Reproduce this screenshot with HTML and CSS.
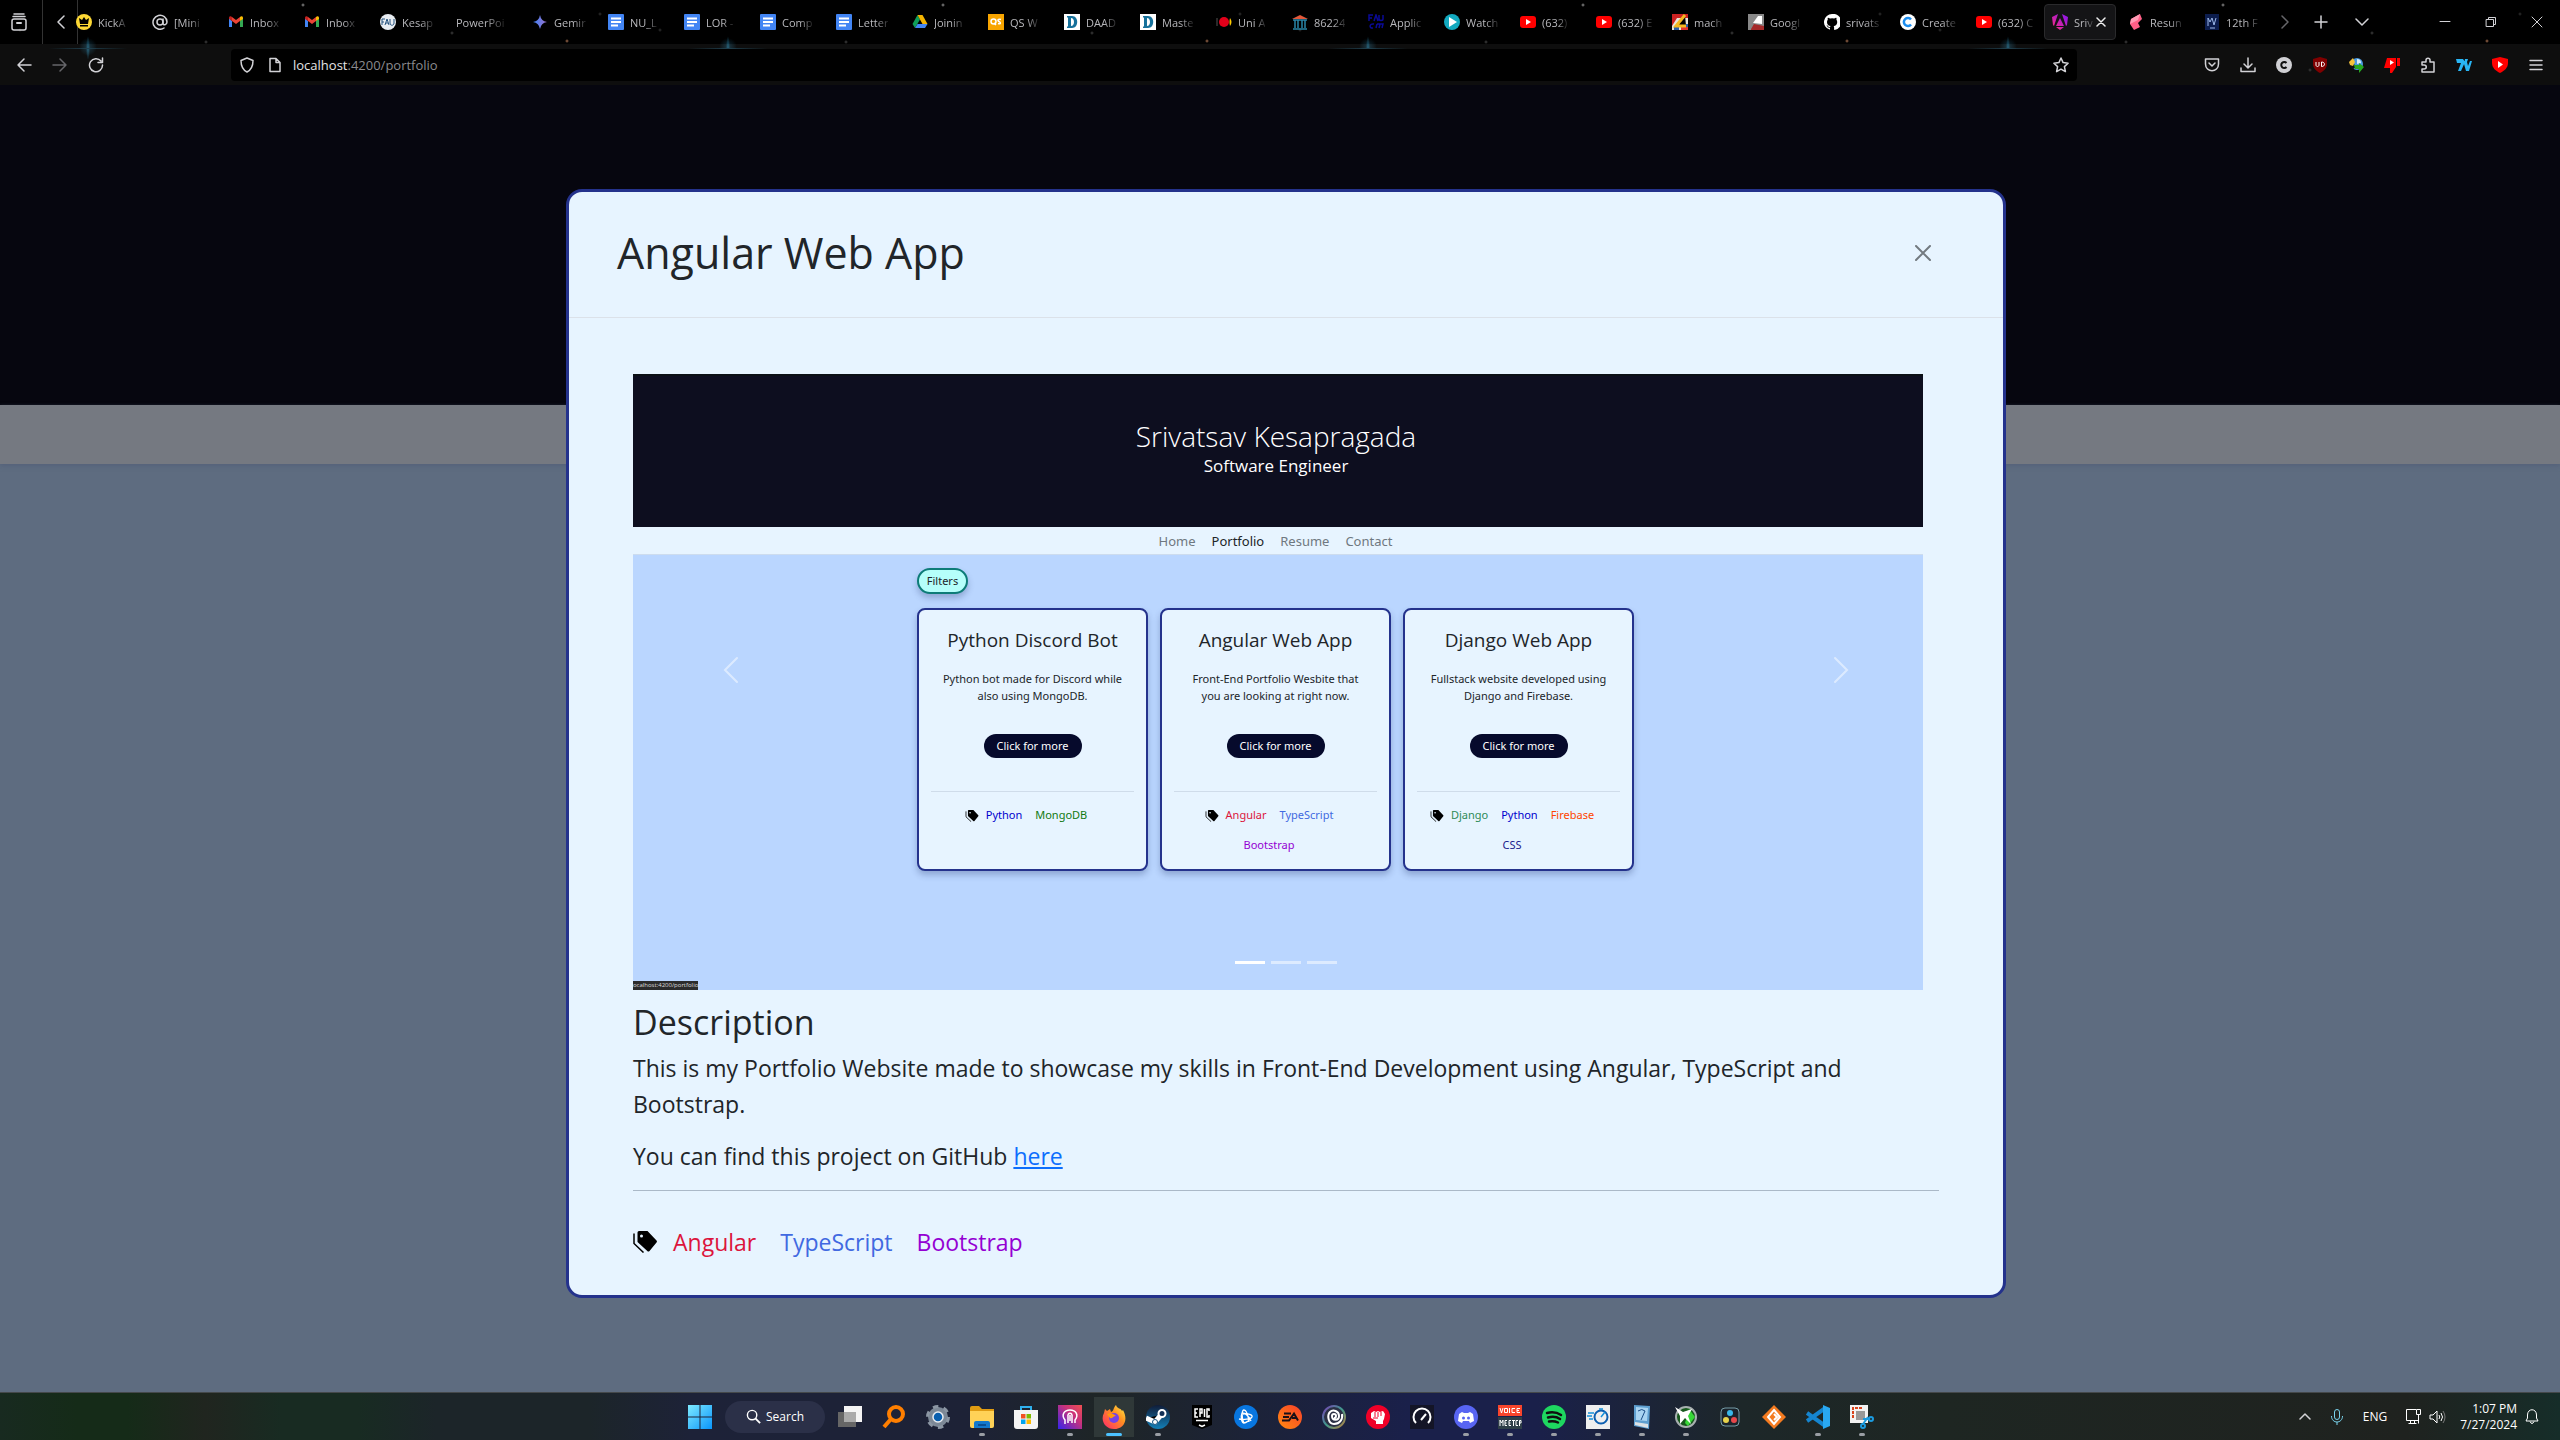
FILE: index.html
```html
<!DOCTYPE html>
<html lang="en">
<head>
<meta charset="utf-8">
<title>Srivatsav Kesapragada</title>
<link rel="stylesheet" href="styles.css">
</head>
<body>
<svg class="defs" aria-hidden="true">
  <symbol id="gmail" viewBox="0 0 16 16"><path fill="#4285f4" d="M1 4v9h3V7z"/><path fill="#34a853" d="M12 13h3V4l-3 3z"/><path fill="#ea4335" d="M4 3l4 3 4-3v4l-4 3-4-3z"/><path fill="#c5221f" d="M1 4c0-2 2-2 3-1v4L1 5z"/><path fill="#fbbc04" d="M15 4c0-2-2-2-3-1v4l3-2z"/></symbol>
  <symbol id="doc" viewBox="0 0 16 16"><rect width="16" height="16" rx="1" fill="#4285f4"/><path stroke="#fff" stroke-width="2" d="M3 4.500h10M3 8h10M3 11.500h7"/></symbol>
  <symbol id="daad" viewBox="0 0 16 16"><path fill="#fff" d="M0 0h16v16H0z"/><path fill="#16719b" fill-rule="evenodd" d="M3 2h5c7 0 7 12 0 12H3v-1l1-1V4L3 3zM7 4v8c4 0 4-8 0-8z"/></symbol>
  <symbol id="yt" viewBox="0 0 16 16"><rect y="2" width="16" height="12" rx="3" fill="#f00"/><path fill="#fff" d="M6 5l5 3-5 3z"/></symbol>
  <symbol id="tag" viewBox="0 0 24 22"><path d="M6 0h8.500l9 9.500a1.500 1.500 0 010 2l-7 8.500a1.500 1.500 0 01-2.200 0L4.500 11V1.500A1.500 1.500 0 016 0z"/><path fill="none" stroke="#000" stroke-width="1.500" d="M1 2.500v10l9.500 9"/><path fill="none" stroke="#e7f4ff" d="M3.500 1v10.500L13 21"/><circle cx="8.500" cy="5" r="1.500" fill="#e7f4ff"/></symbol>
</svg>

<header class="chrome">
  <div class="tabbar">
    <button class="box" aria-label="Recent browsing"><svg width="18" height="18" viewBox="0 0 18 18" class="line"><path d="M4 1h10M3 3.500h12"/><rect x="2" y="6" width="14" height="11" rx="2"/><path d="M7 10h4" stroke-width="2"/></svg></button>
    <button class="prev" aria-label="Scroll tabs left"><svg width="10" height="14" viewBox="0 0 10 14" class="line"><path d="M8 1L2 7l6 6"/></svg></button>
    <nav class="tabs">
      <a class="tab" href="#"><svg viewBox="0 0 16 16"><circle cx="8" cy="8" r="8" fill="#fdd835"/><path d="M3 4l3 2 2-3 2 3 3-2-1 6H4zM4 11h8v1.500H4z"/></svg><span>KickA</span></a>
      <a class="tab" href="#"><svg viewBox="0 0 16 16" class="line"><circle cx="8" cy="8" r="3"/><path d="M11 5v4c0 3 4 2 4-1a7 7 0 10-3 6"/></svg><span>[Mini</span></a>
      <a class="tab" href="#"><svg><use href="#gmail"/></svg><span>Inbox</span></a>
      <a class="tab" href="#"><svg><use href="#gmail"/></svg><span>Inbox</span></a>
      <a class="tab" href="#"><svg viewBox="0 0 16 16"><circle cx="8" cy="8" r="8" fill="#e8edf2"/><path stroke="#24527e" fill="none" d="M2 11V5h3M2 8h2M5 11l2-6 2 6M6 9h2M10 5v4c0 3 4 3 4 0V5"/></svg><span>Kesap</span></a>
      <a class="tab plain" href="#"><span>PowerPoi</span></a>
      <a class="tab" href="#"><svg viewBox="0 0 16 16"><defs><linearGradient id="gem"><stop stop-color="#3f83f8"/><stop offset="1" stop-color="#9b72cb"/></linearGradient></defs><path fill="url(#gem)" d="M8 1q1 6 7 7-6 1-7 7-1-6-7-7 6-1 7-7z"/></svg><span>Gemir</span></a>
      <a class="tab" href="#"><svg><use href="#doc"/></svg><span>NU_L</span></a>
      <a class="tab" href="#"><svg><use href="#doc"/></svg><span>LOR -</span></a>
      <a class="tab" href="#"><svg><use href="#doc"/></svg><span>Comp</span></a>
      <a class="tab" href="#"><svg><use href="#doc"/></svg><span>Letter</span></a>
      <a class="tab" href="#"><svg viewBox="0 0 16 16"><path fill="#0f9d58" d="M5.500 1L8 5.500 3 14 .500 10z"/><path fill="#f4b400" d="M5.500 1h5l5 9h-5z"/><path fill="#4285f4" d="M3 14l2.500-4h10L13 14z"/></svg><span>Joinin</span></a>
      <a class="tab" href="#"><svg viewBox="0 0 16 16"><path fill="#f8a500" d="M0 0h16v16H0z"/><circle cx="5.500" cy="7.500" r="2.500" fill="none" stroke="#fff" stroke-width="1.500"/><path fill="none" stroke="#fff" stroke-width="1.500" d="M13 5.500c-3-1-4 1-2 2s2 3-1 2M6 9l2 2"/></svg><span>QS W</span></a>
      <a class="tab" href="#"><svg><use href="#daad"/></svg><span>DAAD</span></a>
      <a class="tab" href="#"><svg><use href="#daad"/></svg><span>Maste</span></a>
      <a class="tab" href="#"><svg viewBox="0 0 16 16"><circle cx="8" cy="8" r="5" fill="#e2001a"/><path fill="#fc0" d="M14 4q3 4 0 8-1-4 0-8z"/><path stroke="#555" d="M1 4v8"/></svg><span>Uni A</span></a>
      <a class="tab" href="#"><svg viewBox="0 0 16 16"><path fill="#e2583a" d="M0 5l8-4 8 4z"/><path stroke="#2a86a8" fill="none" stroke-width="1.500" d="M1 6h14M3 6v8M6 6v8M10 6v8M13 6v8M1 15h14"/></svg><span>86224</span></a>
      <a class="tab" href="#"><svg viewBox="0 0 16 16" fill="none" stroke="#0a0a96" stroke-width="1.500"><path d="M1 7V1h4M1 4h3M6 7l2-6 2 6M11 1v4c0 2 4 2 4 0V1M6 10c-5-1-5 5-1 4M8 14l1-4M9 10h6l-1 4M12 10l-1 4"/></svg><span>Applic</span></a>
      <a class="tab" href="#"><svg viewBox="0 0 16 16"><circle cx="8" cy="8" r="8" fill="#12a9bf"/><path fill="#fff" d="M5 3l8 5-8 5z"/></svg><span>Watch</span></a>
      <a class="tab" href="#"><svg><use href="#yt"/></svg><span>(632)</span></a>
      <a class="tab" href="#"><svg><use href="#yt"/></svg><span>(632) E</span></a>
      <a class="tab" href="#"><svg viewBox="0 0 16 16"><path fill="#e9e4da" d="M0 0h16v16H0z"/><path fill="#c22" d="M0 0h16v4H5L0 12z"/><path fill="#2b5fa8" d="M9 10h7v3H9zM2 13h5v3H2z"/><path fill="#d33" d="M9 13h7v3H9z"/><path stroke="#f4b820" stroke-width="3" d="M13 1L4 12h10"/></svg><span>mach</span></a>
      <a class="tab" href="#"><svg viewBox="0 0 16 16"><path fill="#888" d="M0 0h16v16H0z"/><path fill="#fff" d="M5 9L10 2h4v8z"/><path fill="#a52a2a" d="M3 15l3-5 10 2v4H3z"/></svg><span>Googl</span></a>
      <a class="tab" href="#"><svg viewBox="0 0 16 16"><path fill="#fff" d="M8 0a8 8 0 00-2.500 15.600c.400 0 .500-.200.500-.400v-1.500c-2 .500-2.500-1-2.700-1.400-.300-.600-.700-.800-.700-.900 1-.200 1.500.800 1.700 1 .6 1 1.400.700 1.800.500 0-.500.300-.800.500-1-2-.200-3.600-1-3.600-4 0-.8.300-1.500.8-2.100 0-.3-.4-1 .1-2.100 0 0 .7-.2 2.200.8a8 8 0 014 0c1.500-1 2.200-.8 2.200-.8.500 1.100.1 1.800.1 2.100.500.600.8 1.300.8 2.100 0 3-1.800 3.800-3.600 4 .3.300.500.800.500 1.500v2.200c0 .200.100.400.500.400A8 8 0 008 0z"/></svg><span>srivats</span></a>
      <a class="tab" href="#"><svg viewBox="0 0 16 16"><circle cx="8" cy="8" r="8" fill="#fff"/><path d="M11 5.500a4 4 0 100 5" fill="none" stroke="#1b8df0" stroke-width="2.500"/></svg><span>Create</span></a>
      <a class="tab" href="#"><svg><use href="#yt"/></svg><span>(632) C</span></a>
      <a class="tab active" href="#"><svg viewBox="0 0 16 16"><defs><linearGradient id="ang" x1="0" y1="1" x2="1" y2="0"><stop stop-color="#ff2d78"/><stop offset="1" stop-color="#8514f5"/></linearGradient></defs><path fill="url(#ang)" d="M6 0L0 3l1 8 1 1zM10 0l6 3-1 8-1 1zM8 4l4 8H4zM4 13h8l-4 3z"/></svg><span>Sriv</span><svg class="line x" viewBox="0 0 10 10"><path d="M1 1l8 8M9 1L1 9"/></svg></a>
      <a class="tab" href="#"><svg viewBox="0 0 16 16"><path fill="#ff5f87" d="M3 5l9-5 2 5-4 4 2 4-6 3-4-6z"/><path fill="#ff9ab4" d="M3 5l9-5-2 6-8 4z"/></svg><span>Resun</span></a>
      <a class="tab" href="#"><svg viewBox="0 0 16 16"><path fill="#0c1d4e" d="M1 0h14v16H1z"/><path stroke="#9db9ea" fill="none" d="M4 12V4l2 4 2-4 2 7 2-7M6 14h5"/></svg><span>12th F</span></a>
    </nav>
    <button class="next" aria-label="Scroll tabs right"><svg width="10" height="14" viewBox="0 0 10 14" class="line dim"><path d="M2 1l6 6-6 6"/></svg></button>
    <button class="win" aria-label="New tab"><svg width="14" height="14" viewBox="0 0 14 14" class="line"><path d="M7 1v12M1 7h12"/></svg></button>
    <button class="win" aria-label="List all tabs"><svg width="14" height="14" viewBox="0 0 14 14" class="line"><path d="M1 4l6 6 6-6"/></svg></button>
    <div class="window-buttons">
      <button class="win" aria-label="Minimize"><svg width="12" height="12" viewBox="0 0 12 12" class="line thin"><path d="M1 5.500h10"/></svg></button>
      <button class="win" aria-label="Restore"><svg width="12" height="12" viewBox="0 0 12 12" class="line thin"><path d="M1.500 3.500h7v7h-7zM3.500 3.500v-2h7v7h-2"/></svg></button>
      <button class="win" aria-label="Close"><svg width="12" height="12" viewBox="0 0 12 12" class="line thin"><path d="M1 1l10 10M11 1L1 11"/></svg></button>
    </div>
  </div>
  <div class="toolbar">
    <div class="history">
      <button aria-label="Back"><svg width="16" height="16" viewBox="0 0 16 16" class="line"><path d="M15 8H2M8 2L2 8l6 6"/></svg></button>
      <button aria-label="Forward"><svg width="16" height="16" viewBox="0 0 16 16" class="line dim"><path d="M1 8h13M8 2l6 6-6 6"/></svg></button>
      <button aria-label="Reload"><svg width="16" height="16" viewBox="0 0 16 16" class="line"><path d="M13 4a6.500 6.500 0 101.500 4M14.500 1v4.500H10"/></svg></button>
    </div>
    <div class="urlbar">
      <svg width="16" height="16" viewBox="0 0 16 16" class="line"><path d="M8 1l6 2.500c0 6-2 9.500-6 11.500-4-2-6-5.500-6-11.500z"/></svg>
      <svg width="16" height="16" viewBox="0 0 16 16" class="line"><path d="M3 1.500h6l4 4v9H3zM9 1.500v4h4"/></svg>
      <span class="url">localhost<span>:4200/portfolio</span></span>
      <button aria-label="Bookmark this page"><svg width="16" height="16" viewBox="0 0 16 16" class="line"><path d="M8 1l2.100 4.600 5 .600-3.700 3.400 1 5L8 12.100l-4.400 2.500 1-5L.900 6.200l5-.600z"/></svg></button>
    </div>
    <div class="extensions">
      <button aria-label="Pocket"><svg viewBox="0 0 16 16" class="line"><path d="M1.500 2h13v5c0 9-13 9-13 0zM5 6l3 3 3-3"/></svg></button>
      <button aria-label="Downloads"><svg viewBox="0 0 16 16" class="line"><path d="M8 1v9M4 7l4 4 4-4M1 11v3.500h14V11"/></svg></button>
      <button aria-label="Extension C"><svg viewBox="0 0 16 16"><circle cx="8" cy="8" r="8" fill="#d0d0d4"/><path fill="none" stroke="#111" stroke-width="2" d="M10.500 6a3 3 0 100 4"/></svg></button>
      <button aria-label="uBlock"><svg viewBox="0 0 16 16"><path fill="#800000" d="M8 0l7 2v5c0 4-3 7-7 9-4-2-7-5-7-9V2z"/><path fill="none" stroke="#fff" d="M4 5v3c0 2 3 2 3 0V5M9.500 5v4.500c4 0 4-4.500 0-4.500z"/></svg></button>
      <button aria-label="Download manager"><svg viewBox="0 0 16 16"><circle cx="9" cy="7" r="6" fill="#4b9be0"/><path fill="#d8ecfa" d="M9 2a4 4 0 014 4l-4 1z"/><path fill="#111" d="M1 8l5-1 2 3-4 3z"/><path fill="#f5c33b" d="M1 5l4-4 2 4-2 4-3-1z"/><path fill="#26a820" d="M6 8h5V6l5 4-5 6v-4H7z"/></svg></button>
      <button aria-label="Show dislikes"><svg viewBox="0 0 16 16"><path fill="#f00" d="M3 1h9v9l-4 6H6v-5H0zM13 1h3v8h-3z"/><path fill="#fff" d="M6 3l4 2.500L6 8z"/></svg></button>
      <button aria-label="Extensions"><svg viewBox="0 0 16 16" class="line"><path d="M2 5h4V3c0-2.500 4-2.500 4 0v2h4v10H2v-3h2c3 0 3-4 0-4H2z"/></svg></button>
      <button aria-label="7TV"><svg viewBox="0 0 16 16"><path fill="#29b6f6" d="M0 2h7l2 3-4 9H2l3-8H1zM9 2h3l-1 3 1 4 2-5h2l-3 10h-3L8 7z"/></svg></button>
      <button aria-label="YouTube tools"><svg viewBox="0 0 16 16"><path fill="#f00" d="M8 0l8 2v4c0 5-4 8-8 10-4-2-8-5-8-10V2z"/><path fill="#fff" d="M6 4l5 3.500L6 11z"/></svg></button>
      <button aria-label="Menu"><svg viewBox="0 0 16 16" class="line"><path d="M2 3.500h12M2 8h12M2 12.500h12"/></svg></button>
    </div>
  </div>
</header>

<main class="page">
  <div class="page-hero"></div>
  <div class="page-nav"></div>
  <div class="backdrop">
    <section class="modal" role="dialog" aria-labelledby="modal-title">
      <div class="modal-header">
        <h1 id="modal-title">Angular Web App</h1>
        <button class="close" aria-label="Close"><svg width="16" height="16" viewBox="0 0 16 16"><path d="M1 1l14 14M15 1L1 15" stroke="#737a80" stroke-width="2" stroke-linecap="round"/></svg></button>
      </div>
      <div class="modal-body">
        <div class="carousel">
          <div class="slide">
            <div class="site-hero"><p class="site-name">Srivatsav Kesapragada</p><p class="site-role">Software Engineer</p></div>
            <nav class="site-nav"><a href="#">Home</a><a href="#" class="current">Portfolio</a><a href="#">Resume</a><a href="#">Contact</a></nav>
            <div class="site-main">
              <div class="site-column">
                <button class="filters">Filters</button>
                <div class="cards">
                  <article class="card">
                    <h2>Python Discord Bot</h2>
                    <p>Python bot made for Discord while also using MongoDB.</p>
                    <button class="more">Click for more</button>
                    <div class="card-tags"><svg><use href="#tag"/></svg><span class="blue">Python</span><span class="green">MongoDB</span></div>
                  </article>
                  <article class="card">
                    <h2>Angular Web App</h2>
                    <p>Front-End Portfolio Wesbite that you are looking at right now.</p>
                    <button class="more">Click for more</button>
                    <div class="card-tags"><svg><use href="#tag"/></svg><span class="crimson">Angular</span><span class="royal">TypeScript</span><span class="violet">Bootstrap</span></div>
                  </article>
                  <article class="card">
                    <h2>Django Web App</h2>
                    <p>Fullstack website developed using Django and Firebase.</p>
                    <button class="more">Click for more</button>
                    <div class="card-tags"><svg><use href="#tag"/></svg><span class="sea">Django</span><span class="blue">Python</span><span class="orange">Firebase</span><span class="navy">CSS</span></div>
                  </article>
                </div>
              </div>
              <div class="status">ocalhost:4200/portfolio</div>
            </div>
          </div>
          <button class="control left" aria-label="Previous"><svg width="32" height="32" viewBox="0 0 16 16"><path d="M11 2L5 8l6 6"/></svg></button>
          <button class="control right" aria-label="Next"><svg width="32" height="32" viewBox="0 0 16 16"><path d="M5 2l6 6-6 6"/></svg></button>
          <div class="indicators"><button class="on" aria-label="Slide 1"></button><button aria-label="Slide 2"></button><button aria-label="Slide 3"></button></div>
        </div>
        <h2 class="description">Description</h2>
        <p>This is my Portfolio Website made to showcase my skills in Front-End Development using Angular, TypeScript and Bootstrap.</p>
        <p>You can find this project on GitHub <a href="#">here</a></p>
        <hr>
        <div class="tags"><svg><use href="#tag"/></svg><span class="crimson">Angular</span><span class="royal">TypeScript</span><span class="violet">Bootstrap</span></div>
      </div>
    </section>
  </div>
</main>

<footer class="taskbar">
  <div></div>
  <div class="apps">
    <button aria-label="Start"><svg viewBox="0 0 24 24"><defs><linearGradient id="win" x1="0" y1="0" x2="1" y2="1"><stop stop-color="#7eeaff"/><stop offset="1" stop-color="#0a95fb"/></linearGradient></defs><path fill="url(#win)" d="M0 0h11.500v11.500H0zM12.500 0H24v11.500H12.500zM0 12.500h11.500V24H0zM12.500 12.500H24V24H12.500z"/></svg></button>
    <button class="search"><svg viewBox="0 0 16 16"><circle cx="6.500" cy="6.500" r="5" fill="none" stroke="#fff" stroke-width="1.500"/><path stroke="#fff" stroke-width="2" d="M10 10l5 5"/></svg>Search</button>
    <button aria-label="Task view"><svg viewBox="0 0 24 24"><path fill="#f4f4f4" d="M6 1h18v16H6z"/><path fill="#666" d="M0 7h18v15H0z"/><path fill="#aaa" d="M6 7h12v10H6z"/></svg></button>
    <button aria-label="Everything"><svg viewBox="0 0 24 24" fill="none" stroke="#ff7f00"><circle cx="14" cy="9" r="7" stroke-width="4"/><path stroke-width="4" d="M9 14l-7 8"/></svg></button>
    <button aria-label="Settings"><svg viewBox="0 0 24 24"><circle cx="12" cy="12" r="7.500" fill="none" stroke="#7c8896" stroke-width="5"/><circle cx="12" cy="12" r="10.500" fill="none" stroke="#8b96a3" stroke-width="3" stroke-dasharray="5.500 5.500"/><circle cx="12" cy="12" r="5" fill="#0a5fae" stroke="#e8edf2" stroke-width="1.500"/></svg></button>
    <button class="open" aria-label="Explorer"><svg viewBox="0 0 24 24"><path fill="#e09c12" d="M0 3q0-2 2-2h7l3 3h12v8H0z"/><path fill="#ffd257" d="M0 6h24v15q0 2-2 2H2q-2 0-2-2z"/><path fill="#1378cc" d="M4 23v-5q0-2 2-2h12q2 0 2 2v5z"/><path fill="#0a4f94" d="M8 19h8v2H8z"/></svg></button>
    <button aria-label="Store"><svg viewBox="0 0 24 24"><path fill="none" stroke="#2fb0ee" stroke-width="2" d="M7 6V2h10v4"/><path fill="#f4f4f4" d="M0 5h24v16q0 3-3 3H3q-3 0-3-3z"/><path fill="#f25022" d="M7 9h4.500v4.500H7z"/><path fill="#7fba00" d="M12.500 9H17v4.500h-4.500z"/><path fill="#00a4ef" d="M7 14.500h4.500V19H7z"/><path fill="#ffb900" d="M12.500 14.500H17V19h-4.500z"/></svg></button>
    <button class="open" aria-label="Assistant"><svg viewBox="0 0 24 24"><defs><linearGradient id="hd" x1="0" y1="1" x2="1" y2="0"><stop stop-color="#3424ee"/><stop offset=".6" stop-color="#c8327c"/><stop offset="1" stop-color="#f05050"/></linearGradient></defs><path fill="url(#hd)" d="M0 0h24v24H0z"/><path fill="none" stroke="#fff" stroke-width="1.500" d="M7 19v-4c-4-5-1-10 5-10s9 5 5 10v3M10 18v-6c-1-5 5-5 4 0v6M12 10v6"/></svg></button>
    <button class="open focused" aria-label="Firefox"><svg viewBox="0 0 24 24"><defs><linearGradient id="fx" x1="1" y1="0" x2="0" y2="1"><stop stop-color="#fff14a"/><stop offset=".4" stop-color="#ff9020"/><stop offset="1" stop-color="#ff246e"/></linearGradient></defs><path fill="url(#fx)" d="M3 4l2 2 3-2 1 3c3-1 2-4 5-7 1 4 5 3 6 6l1-1c6 11 0 19-9 19C3 24-2 15 2 8z"/><circle cx="12" cy="13" r="5" fill="#7542e5"/><path fill="#ff980e" d="M5 9c4-2 7 0 9 2-3 0-3 3-6 2z"/></svg></button>
    <button class="open" aria-label="Steam"><svg viewBox="0 0 24 24"><defs><linearGradient id="st" x1="0" y1="0" x2="0" y2="1"><stop stop-color="#101c38"/><stop offset="1" stop-color="#1380b8"/></linearGradient></defs><circle cx="12" cy="12" r="12" fill="url(#st)"/><path stroke="#fff" stroke-width="5" d="M0 13l9 4 6-7"/><circle cx="16" cy="8.500" r="3.500" fill="#123056" stroke="#fff" stroke-width="2"/><circle cx="9" cy="17" r="2.500" fill="#fff" stroke="#14507e"/></svg></button>
    <button aria-label="Epic Games"><svg viewBox="0 0 24 24"><path d="M2 0h20v20l-10 4-10-4z"/><path fill="none" stroke="#fff" stroke-width="1.500" d="M8 4H5v8h3M5 8h2M10 12V4h2v4h-2M14.500 4v8M19 6V4h-2v8h2v-2M6 15.500h12M9 20l3 1.500 3-1.500"/></svg></button>
    <button aria-label="Battle.net"><svg viewBox="0 0 24 24"><circle cx="12" cy="12" r="12" fill="#0876e0"/><g fill="none" stroke="#fff" stroke-width="1.300"><path d="M10 18C7 12 8 5 10 5s4 5 5 12M5 14c4 1 12 0 13-2s-4-4-9-3M17 16c-2-5-7-9-9-8M8 8c-2 5 0 10 2 10s6-3 8-6"/></g></svg></button>
    <button aria-label="EA"><svg viewBox="0 0 24 24"><defs><linearGradient id="ea" x1="1" y1="0" x2="0" y2="1"><stop stop-color="#f8402a"/><stop offset="1" stop-color="#ff8a10"/></linearGradient></defs><circle cx="12" cy="12" r="12" fill="url(#ea)"/><path fill="none" stroke="#181018" stroke-width="2" d="M6 8.500h7M5 12h6M4 15.500h7l5-7 4 7M14 13h5"/></svg></button>
    <button aria-label="Ubisoft"><svg viewBox="0 0 24 24"><defs><linearGradient id="ub" x1="0" y1="0" x2="1" y2="1"><stop stop-color="#7a3fb8"/><stop offset=".5" stop-color="#3f9a8c"/><stop offset="1" stop-color="#b88040"/></linearGradient></defs><circle cx="12" cy="12" r="11" fill="#2b3044" stroke="url(#ub)" stroke-width="2"/><path fill="none" stroke="#fff" stroke-width="2" d="M12 13a2 2 0 10-2-2c0 5 7 5 7 0s-6-7-9-4-2 12 4 12 9-5 8-10"/></svg></button>
    <button aria-label="Games"><svg viewBox="0 0 24 24"><circle cx="12" cy="12" r="12" fill="#f00028"/><path fill="#fff" d="M5 8l3-2 2 1 2-1 2 1 3-1 2 3-1 5-1 2v3H10v-3l-5-3z"/><path stroke="#f00028" d="M9 7v5M12 7v5M15 7v4M7 13h5"/></svg></button>
    <button aria-label="Speedtest"><svg viewBox="0 0 24 24"><path fill="#141526" d="M0 0h24v24H0z"/><path fill="none" stroke="#fff" stroke-width="2" d="M6 18a8.500 8.500 0 1112 0M11 15l5-6"/></svg></button>
    <button class="open" aria-label="Discord"><svg viewBox="0 0 24 24"><circle cx="12" cy="12" r="12" fill="#5865f2"/><path fill="#fff" d="M8 7l2 1h4l2-1 3 2 1 7-4 2-1-2H9l-1 2-4-2 1-7z"/><circle cx="9.500" cy="13" r="1.500" fill="#5865f2"/><circle cx="14.500" cy="13" r="1.500" fill="#5865f2"/></svg></button>
    <button class="open" aria-label="Voicemeeter"><svg viewBox="0 0 24 24"><path fill="#f8452c" d="M0 0h24v11H0z"/><path fill="#2f3f48" d="M0 12h24v12H0z"/><path fill="none" stroke="#fff" d="M2 3l1.500 5L5 3M6.500 3.500h3v4h-3zM11.500 3v5M17 3.500h-3v4h3M22 3.500h-3v4h3M19 5.500h2M2 21v-6l1.500 3L5 15v6M9 15.500H7v5h2M7 18h1.500M13 15.500h-2v5h2M11 18h1.500M14 15.500h3M15.500 15.500V21M20 15.500h-2v5h2M21.500 21v-5.500h1.500V18h-1.500"/></svg></button>
    <button class="open" aria-label="Spotify"><svg viewBox="0 0 24 24"><circle cx="12" cy="12" r="12" fill="#1ed760"/><path fill="none" stroke="#101010" stroke-width="2.500" stroke-linecap="round" d="M5 8q8-2 14 2M6 12.500q7-2 12 1.500M7 16.500q5-1 9 1"/></svg></button>
    <button class="open" aria-label="Timer"><svg viewBox="0 0 24 24"><path fill="#efefef" d="M0 0h24v24H0z"/><circle cx="15" cy="12" r="6.500" fill="none" stroke="#0d5fb0" stroke-width="2"/><path stroke="#1590dc" stroke-width="1.500" d="M15 12l4-5M2 8h6M1 11h5M3 14h4M13 4h4"/></svg></button>
    <button class="open" aria-label="Meter"><svg viewBox="0 0 24 24"><path fill="#5e9fd0" d="M4 0l16 1-1 23-15-3z"/><path fill="#a9d4f2" d="M6 2l12 1-1 13-11-1z"/><path fill="none" stroke="#1b4c86" d="M8 6q4-3 7 0l-4 9"/><path fill="#dce2e6" d="M5 17l13 2v4L5 20z"/></svg></button>
    <button class="open" aria-label="Overclock"><svg viewBox="0 0 24 24"><circle cx="12" cy="12" r="10" fill="#18591e" stroke="#a8b0b0" stroke-width="2"/><path fill="#38d838" d="M15 4l6 8-7 9-3-3z"/><path fill="#fff" d="M1 2l8 5 9-3-4 7 3 8-6-6-5 6v-8z"/></svg></button>
    <button aria-label="Resolve"><svg viewBox="0 0 24 24"><rect x="3" y="3" width="18" height="18" rx="4" fill="#1b242c" stroke="#769da8"/><circle cx="12" cy="8" r="3" fill="#39b8ea"/><circle cx="8" cy="15" r="3" fill="#e8d34c"/><circle cx="16" cy="15" r="3" fill="#e8484b"/></svg></button>
    <button aria-label="Tools"><svg viewBox="0 0 24 24"><path fill="#f47b20" d="M12 0l12 12-12 12L0 12z"/><path fill="none" stroke="#fff" stroke-width="2" d="M12 5l6 7-6 7-6-7zM12 9l3 3-3 3"/></svg></button>
    <button class="open" aria-label="VS Code"><svg viewBox="0 0 24 24"><path fill="none" stroke="#1585d0" stroke-width="4" d="M1 8l17 12M1 16L18 4"/><path fill="#29a8f2" d="M17 0l7 3v18l-7 3z"/></svg></button>
    <button class="open" aria-label="Snipping Tool"><svg viewBox="0 0 24 24"><path fill="#f2f2f2" d="M0 0h18v18H0z"/><path fill="none" stroke="#d8431c" stroke-width="2" stroke-dasharray="3 1" d="M3 13V3h10"/><path fill="#999" d="M6 6h9v9H6z"/><g fill="none" stroke="#1b9be0" stroke-width="2"><path d="M18 12l-5 7M13 14l7 0"/><circle cx="13" cy="21" r="2"/><circle cx="21" cy="14" r="2"/></g></svg></button>
  </div>
  <div class="tray">
    <svg width="12" height="12" viewBox="0 0 12 12" class="line"><path d="M1 8l5-5 5 5"/></svg>
    <svg class="mic" width="16" height="16" viewBox="0 0 16 16"><g fill="none" stroke="#7ad4ee"><rect x="5.500" y=".5" width="5" height="10" rx="2.500"/><path d="M2.500 7c0 8 11 8 11 0M8 13v3"/></g></svg>
    <span class="lang">ENG</span>
    <svg class="net" width="17" height="17" viewBox="0 0 17 17" fill="none" stroke="#fff"><path d="M11 1.500H1.500v11H13M5.500 12.500v3M9.500 12.500v3M3.500 15.500h8M11.500 1.500h4v5h-4zM13.500 6.500v9"/></svg>
    <svg width="17" height="16" viewBox="0 0 17 16" fill="none" stroke="#fff"><path d="M1 6h3l4-4v12l-4-4H1zM10 6q1.500 2 0 4M12 4q3 4 0 8"/><path stroke="#777" d="M14 2q4 6 0 12"/></svg>
    <time>1:07 PM<br>7/27/2024</time>
    <svg class="bell" width="14" height="16" viewBox="0 0 14 16" fill="none" stroke="#fff"><path d="M1 12l1.500-3V6c0-7 9-7 9 0v3l1.500 3zM5 12.500q2 4 4 0"/></svg>
  </div>
</footer>
</body>
</html>
```
FILE: styles.css
```css
* { box-sizing: border-box; }

body {
  margin: 0;
  min-height: 100vh;
  display: flex;
  flex-direction: column;
  background: #5e6c80;
  font-family: "Open Sans", "Noto Sans", sans-serif;
  color: #212529;
}

button { border: 0; padding: 0; background: none; font: inherit; color: inherit; }
a { color: inherit; text-decoration: none; }
p, h1, h2 { margin: 0; font-weight: 400; }
.defs { position: absolute; width: 0; height: 0; }

.line { fill: none; stroke: #d2d2d6; stroke-width: 1.5; stroke-linecap: round; stroke-linejoin: round; }
.line.dim { stroke: #66666a; }
.line.thin { stroke-width: 1; }

/* Browser chrome: a starfield that repeats every 640px */
.chrome {
  background-color: #000;
  background-image:
    linear-gradient(90deg, transparent 48px, #123443 88px, transparent 128px),
    radial-gradient(ellipse 2px 12px at 88px 48px, #1b5a74, transparent),
    radial-gradient(circle at 88px 47px, #0f2e3c, transparent 9px),
    radial-gradient(circle at 303px 5px, #999, transparent 2px),
    radial-gradient(circle at 567px 41px, #a87050, transparent 2px),
    radial-gradient(circle at 206px 42px, #444, transparent 2px),
    radial-gradient(circle at 452px 33px, #444, transparent 2px),
    radial-gradient(circle at 20px 30px, #333, transparent 2px),
    radial-gradient(circle at 600px 14px, #333, transparent 2px),
    radial-gradient(circle at 390px 70px, #333, transparent 2px);
  background-size: 640px 1px, 640px 100%;
  background-size: 640px 1px, 640px 100%, 640px 100%, 640px 100%, 640px 100%, 640px 100%, 640px 100%, 640px 100%, 640px 100%, 640px 100%;
  background-position: 0 48px, 0 0, 0 0, 0 0, 0 0, 0 0, 0 0, 0 0, 0 0, 0 0;
  background-repeat: repeat-x;
  color: #b8b8bc;
}

.tabbar { display: flex; height: 44px; align-items: stretch; }
.tabbar button { display: grid; place-items: center; }
.tabbar .box { width: 43px; padding-right: 4px; border-right: 1px solid #333; }
.tabbar .prev { width: 23px; padding-left: 12px; }
.tabbar .next { width: 30px; }
.tabs {
  display: flex;
  background: linear-gradient(#333, #333) 11px 0 / 1px 100% no-repeat;
}
.tab {
  width: 72px;
  height: 36px;
  margin: 4px 2px;
  padding-left: 8px;
  display: flex;
  align-items: center;
  gap: 6px;
  font-size: 11px;
  border-radius: 4px;
  white-space: nowrap;
}
.tab svg { width: 16px; height: 16px; flex: none; }
.tab span { mask-image: linear-gradient(90deg, #000 60%, rgba(0, 0, 0, .2)); }
.tab.active { background: #141416; border: 1px solid #2a2a2c; padding-left: 7px; }
.tab.active .x { width: 10px; height: 10px; margin-left: -3px; stroke: #eee; }
.win { width: 41px; }
.window-buttons { display: flex; margin-left: auto; }
.window-buttons .win { width: 46px; }

.toolbar { display: flex; height: 41px; align-items: center; background: rgba(255, 255, 255, .055); }
.toolbar button { display: grid; place-items: center; }
.history { display: flex; width: 231px; padding-left: 6px; }
.history button { width: 36px; height: 32px; }
.urlbar {
  flex: 1;
  height: 32px;
  padding: 0 8px;
  display: flex;
  align-items: center;
  gap: 12px;
  background: #000;
  border-radius: 4px;
}
.url { flex: 1; font-size: 13px; color: #e4e4e6; margin-left: -2px; }
.url span { color: #8a8a8e; }
.extensions { display: flex; margin-left: 117px; padding-right: 6px; }
.extensions button { width: 36px; height: 32px; }
.extensions svg { width: 16px; height: 16px; }

/* Dimmed page and the dialog over it */
.page { position: relative; flex: 1; display: flex; flex-direction: column; }
.page-hero { height: 320px; background: #06060f; }
.page-nav { height: 59px; background: #757981; box-shadow: 0 2px 4px #55627a; }
.backdrop {
  position: absolute;
  inset: 0;
  display: flex;
  justify-content: center;
  align-items: flex-start;
  padding: 104px 0 0 12px;
}
.modal {
  width: 90%;
  max-width: 1440px;
  background: #e7f4ff;
  border: 3px solid #24328c;
  border-radius: 16px;
}
.modal-header {
  display: flex;
  align-items: center;
  justify-content: space-between;
  padding: 30px 72px 34px 48px;
  border-bottom: 1px solid #dbe1e9;
}
.modal-header h1 { font-size: 43px; line-height: 61px; }
.close { display: grid; place-items: center; }
.modal-body { padding: 56px 64px 33px; font-size: 23px; line-height: 36px; }
.modal-body > p { margin-bottom: 16px; }
.modal-body > p a { color: #0d6efd; text-decoration: underline; }

.carousel { position: relative; margin-bottom: 8px; }
.slide { margin-right: 16px; background: #bad6ff; }
.site-hero {
  height: 153px;
  padding: 43px 4px 0 0;
  background: #0d0e1f;
  border-top: 2px solid #0b1015;
  color: #fff;
  text-align: center;
}
.site-name { font-size: 28px; line-height: 34px; font-weight: 300; }
.site-role { font-size: 17px; line-height: 26px; }
.site-nav {
  height: 28px;
  padding-right: 5px;
  display: flex;
  justify-content: center;
  gap: 16px;
  background: #e7f4ff;
  border-bottom: 1px solid #cddcee;
  font-family: "Noto Sans", sans-serif;
  font-size: 13px;
  line-height: 28px;
  color: #6f7880;
}
.site-nav .current { color: #212529; }
.site-main { position: relative; height: 435px; padding: 13px 5px 0 0; }
.site-column { width: 717px; margin: 0 auto; font-family: "Noto Sans", sans-serif; font-size: 11px; line-height: 17px; }
.filters {
  display: block;
  width: 51px;
  height: 26px;
  padding-bottom: 1px;
  background: #b5fffa;
  border: 2px solid #0d7c78;
  border-radius: 13px;
  box-shadow: 0 4px 6px rgba(40, 60, 110, .3);
}
.cards { display: grid; grid-template-columns: repeat(3, 1fr); gap: 12px; margin-top: 14px; }
.card {
  height: 263px;
  padding: 16px 12px 0;
  display: flex;
  flex-direction: column;
  align-items: center;
  text-align: center;
  background: #e7f4ff;
  border: 2px solid #24328c;
  border-radius: 8px;
  box-shadow: 0 4px 6px rgba(40, 60, 110, .3);
}
.card h2 { font-family: "Open Sans", sans-serif; font-size: 19px; line-height: 28px; }
.card p { padding: 0 8px; margin-top: 16px; }
.more {
  width: 98px;
  height: 24px;
  margin-top: 30px;
  padding-bottom: 1px;
  border-radius: 12px;
  background: #060a2c;
  color: #fff;
}
.card-tags {
  align-self: stretch;
  margin-top: 33px;
  padding-top: 8px;
  border-top: 1px solid #cfdcea;
  line-height: 30px;
}
.card-tags svg { width: 14px; height: 12px; margin-right: 7px; vertical-align: middle; }
.card-tags span { display: inline-block; margin-right: 13px; }
.status {
  position: absolute;
  left: 0;
  bottom: 0;
  height: 9px;
  background: #2b2b2b;
  color: #ddd;
  font-size: 6px;
  line-height: 9px;
}

.blue { color: #0000cd; }
.green { color: #117a11; }
.crimson { color: #dc143c; }
.royal { color: #4169e1; }
.violet { color: #9400d3; }
.sea { color: #2e8b57; }
.orange { color: #ff4500; }
.navy { color: #1a1a8c; }

.control {
  position: absolute;
  top: 0;
  bottom: 24px;
  width: 15%;
  display: grid;
  place-items: center;
  opacity: .5;
}
.control.left { left: 0; }
.control.right { right: 0; }
.control path { fill: none; stroke: #fff; stroke-width: 1; stroke-linecap: round; }
.indicators { position: absolute; left: 0; right: 0; bottom: 26px; display: flex; justify-content: center; gap: 6px; }
.indicators button { width: 30px; height: 3px; background: #fff; opacity: .5; }
.indicators .on { opacity: 1; }

.description { font-size: 34px; line-height: 48px; margin-bottom: 4px; }
.modal-body hr { margin: 0 0 31px; border: 0; border-top: 1px solid #abb9c8; }
.tags { display: flex; align-items: center; gap: 24px; line-height: 40px; }
.tags svg { width: 24px; height: 22px; margin-right: -8px; }

/* Taskbar */
.taskbar {
  height: 48px;
  display: grid;
  grid-template-columns: 1fr auto 1fr;
  align-items: stretch;
  border-top: 1px solid #44484a;
  background: linear-gradient(90deg, #182a20 0, #152b18 3%, #152b18 5%, #20251f 8%, #182b22 11%, #182b22 14%, #1c2529 17%, #1c2529 23%, #1d2238 27%, #1d2236 38%, #1e2526 43%, #1a204a 55%, #1a204a 60%, #1d2729 68%, #1e2622 76%, #1f221f 94%, #162d29 100%);
  color: #fff;
  font-size: 12px;
}
.apps { display: flex; align-items: center; padding-left: 2px; }
.apps button { position: relative; width: 44px; height: 40px; display: grid; place-items: center; }
.apps svg { width: 24px; height: 24px; }
.apps .search {
  width: 100px;
  height: 32px;
  margin: 0 3px;
  display: flex;
  align-items: center;
  justify-content: center;
  gap: 5px;
  border-radius: 16px;
  background: #2b3048;
}
.apps .search svg { width: 15px; height: 15px; }
.apps .open::after {
  content: "";
  position: absolute;
  bottom: 1px;
  left: 19px;
  width: 6px;
  height: 3px;
  border-radius: 2px;
  background: #9a9ea4;
}
.apps .focused { background: linear-gradient(#2f3838, #2f3838) center / 40px 40px no-repeat; }
.apps .focused::after { left: 14px; width: 16px; background: #4cc2ff; }
.tray { display: flex; justify-content: flex-end; align-items: center; padding-right: 21px; }
.tray .mic { margin-left: 18px; }
.tray .lang { margin: 0 18px; }
.tray .net { margin-right: 7px; }
.tray time { margin: 0 8px 0 14px; text-align: right; line-height: 16px; }
```
